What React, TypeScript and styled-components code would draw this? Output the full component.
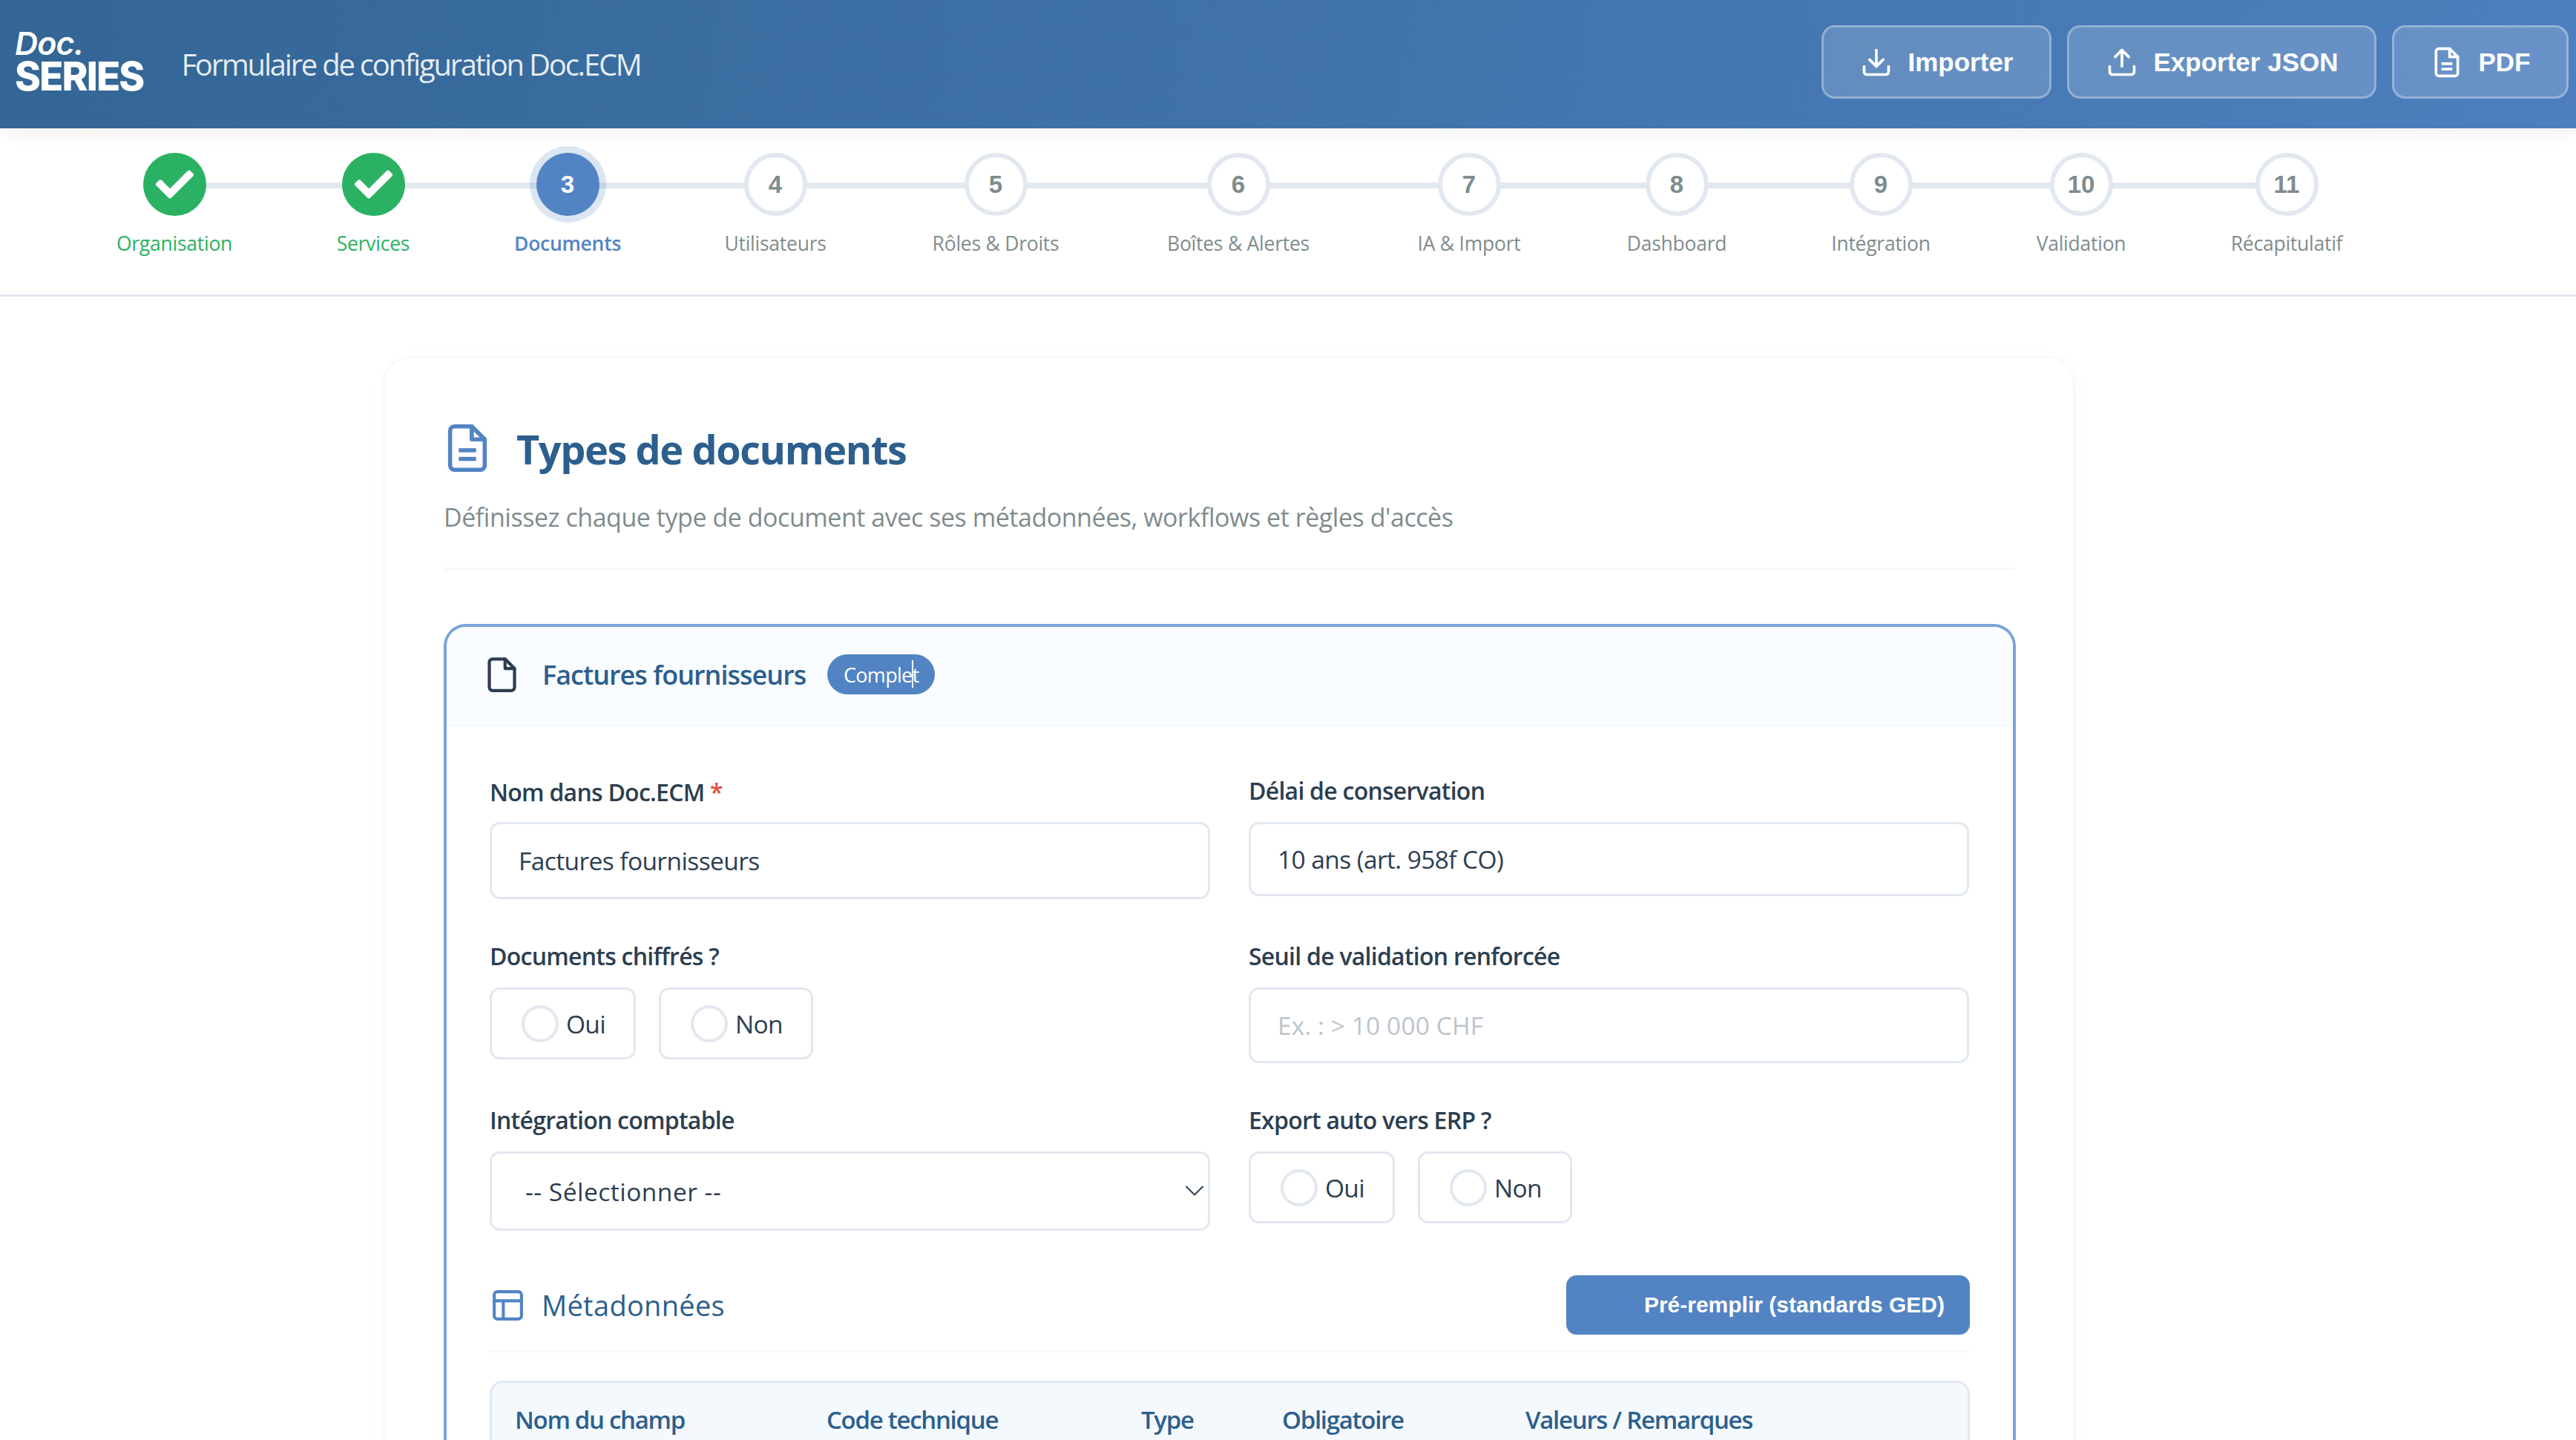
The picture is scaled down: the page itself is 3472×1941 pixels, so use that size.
import React from "react";
import styled, { createGlobalStyle } from "styled-components";
import { FaCheck } from "react-icons/fa";

const Global = createGlobalStyle`
  html, body { margin: 0; padding: 0; width: 3472px; height: 1941px; overflow: hidden; background: #fff; }
  * { box-sizing: border-box; }
  body { font-family: "Open Sans", "Noto Sans", sans-serif; color: #2c3e50; }
`;

const Page = styled.div`
  width: 3472px;
  height: 1941px;
  overflow: hidden;
`;

const Header = styled.header`
  position: relative;
  z-index: 2;
  height: 173px;
  padding: 0 10px 0 20px;
  display: flex;
  align-items: center;
  justify-content: space-between;
  background: linear-gradient(100deg, #336695 0%, #4d7fbe 100%);
  box-shadow: 0 4px 24px rgba(0, 0, 0, 0.07);
`;

const Brand = styled.div`
  display: flex;
  align-items: center;
  gap: 51px;
`;

const Logo = styled.div`
  display: flex;
  flex-direction: column;
  font-family: Inter, sans-serif;
  color: #fff;
  margin-top: -8px;
`;

const LogoDoc = styled.span`
  font-size: 43px;
  line-height: 40px;
  font-style: italic;
  font-weight: 600;
  letter-spacing: -0.8px;
`;

const LogoSeries = styled.span`
  font-size: 53px;
  line-height: 50px;
  font-weight: 800;
  letter-spacing: -1.9px;
`;

const AppTitle = styled.h1`
  margin: 0;
  font-size: 40px;
  font-weight: 400;
  letter-spacing: -2.23px;
  color: rgba(255, 255, 255, 0.88);
`;

const Actions = styled.div`
  display: flex;
  gap: 21px;
  margin-top: -6px;
`;

const HeaderButton = styled.button<{ $w: number }>`
  width: ${(p) => p.$w}px;
  height: 99px;
  display: flex;
  align-items: center;
  justify-content: center;
  gap: 21px;
  border: 3px solid rgba(255, 255, 255, 0.3);
  border-radius: 18px;
  background: rgba(255, 255, 255, 0.16);
  color: #fff;
  font-family: "Liberation Sans", Arial, sans-serif;
  font-size: 35px;
  font-weight: 700;
  padding: 0;
`;

const StepperBar = styled.nav`
  height: 227px;
  width: 3472px;
  border-bottom: 3px solid #e2e8f0;
  padding: 31px 0 0 158px;
`;

const Track = styled.ol`
  position: relative;
  list-style: none;
  margin: 0;
  padding: 2px 0 0;
  display: inline-flex;
  gap: 142px;
  &::before {
    content: "";
    position: absolute;
    left: 77px;
    right: 74px;
    top: 42px;
    height: 8px;
    background: #e2e8f0;
  }
`;

const Step = styled.li<{ $w: number }>`
  position: relative;
  width: ${(p) => p.$w}px;
  display: flex;
  flex-direction: column;
  align-items: center;
  gap: 19px;
`;

type StepState = "done" | "active" | "todo";

const Dot = styled.div<{ $s: StepState }>`
  width: 85px;
  height: 85px;
  border-radius: 50%;
  display: flex;
  align-items: center;
  justify-content: center;
  font-size: 33px;
  font-family: "Liberation Sans", Arial, sans-serif;
  font-weight: 700;
  color: ${(p) => (p.$s === "todo" ? "#7f8c8d" : "#fff")};
  background: ${(p) => (p.$s === "done" ? "#2bb163" : p.$s === "active" ? "#5284c4" : "#fff")};
  border: ${(p) => (p.$s === "todo" ? "6px solid #e2e8f0" : "none")};
  box-shadow: ${(p) => (p.$s === "active" ? "0 0 0 9px rgba(82,132,196,.2)" : "none")};
`;

const StepLabel = styled.span<{ $s: StepState }>`
  font-size: 26.5px;
  line-height: 36px;
  letter-spacing: -0.25px;
  white-space: nowrap;
  font-weight: ${(p) => (p.$s === "active" ? 600 : 400)};
  color: ${(p) => (p.$s === "done" ? "#2bb163" : p.$s === "active" ? "#5284c4" : "#7f8c8d")};
`;

const Main = styled.main`
  width: 3313px;
  padding-top: 80px;
`;

const Card = styled.section`
  width: 2281px;
  margin: 0 auto;
  border: 3px solid #f7f9fc;
  border-radius: 36px;
  padding: 86px 77px 0 79px;
  background: #fff;
  box-shadow: 0 4px 30px rgba(44, 95, 141, 0.02);
`;

const TitleRow = styled.div`
  display: flex;
  align-items: center;
  gap: 31px;
  margin-left: -3px;
`;

const PageTitle = styled.h2`
  margin: 2px 0 0;
  font-size: 54px;
  line-height: 68px;
  font-weight: 700;
  letter-spacing: -1.4px;
  color: #2c5f8d;
`;

const Subtitle = styled.p`
  margin: 33px 0 0;
  padding-bottom: 43px;
  border-bottom: 4px solid #f4f9fd;
  font-size: 34px;
  line-height: 50px;
  letter-spacing: -0.46px;
  color: #7f8c8d;
`;

const TypeCard = styled.article`
  margin-top: 72px;
  border: 4px solid #7ba3d8;
  border-radius: 30px 30px 0 0;
  border-bottom: none;
  height: 1200px;
  overflow: hidden;
`;

const TypeHead = styled.div`
  height: 134px;
  padding: 0 0 4px 49px;
  display: flex;
  align-items: center;
  background: #fafdff;
  border-bottom: 2px solid #f6f9fc;
`;

const TypeName = styled.h3`
  margin: 0 29px 0 29px;
  font-size: 36px;
  font-weight: 600;
  letter-spacing: -1px;
  color: #2c5f8d;
`;

const Badge = styled.span`
  position: relative;
  height: 54px;
  width: 145px;
  border-radius: 27px;
  background: #5284c4;
  color: #fff;
  font-size: 27px;
  letter-spacing: -0.7px;
  display: flex;
  align-items: center;
  justify-content: center;
  &::after {
    content: "";
    position: absolute;
    left: 114px;
    top: 8px;
    width: 2px;
    height: 37px;
    background: #fff;
  }
`;

const TypeBody = styled.div`
  padding: 67px 58px 0;
`;

const FormGrid = styled.div`
  display: grid;
  grid-template-columns: 971px 971px;
  column-gap: 52px;
  row-gap: 57px;
  align-items: start;
`;

const Field = styled.div`
  display: flex;
  flex-direction: column;
`;

const FieldLabel = styled.label<{ $required?: boolean }>`
  font-size: 32px;
  line-height: 40px;
  font-weight: 600;
  letter-spacing: -0.75px;
  color: #2c3e50;
  margin-top: ${(p) => (p.$required ? "2px" : "0")};
  margin-bottom: ${(p) => (p.$required ? "20px" : "22px")};
`;

const Star = styled.span`
  color: #e74c3c;
`;

const TextInput = styled.input<{ $h: number }>`
  height: ${(p) => p.$h}px;
  width: 100%;
  border: 3px solid #e2e8f0;
  border-radius: 14px;
  padding: 0 36px;
  background: #fff;
  font-family: inherit;
  font-size: 33.5px;
  letter-spacing: -0.6px;
  color: #2c3e50;
  outline: none;
  &::placeholder {
    color: #bcc4cc;
    letter-spacing: 0.1px;
  }
`;

const SelectWrap = styled.div`
  position: relative;
  height: 107px;
  & > svg {
    position: absolute;
    right: 9px;
    top: 46px;
    color: #2c3e50;
  }
`;

const Select = styled.select`
  appearance: none;
  width: 100%;
  height: 100%;
  border: 3px solid #e2e8f0;
  border-radius: 14px;
  padding: 0 45px;
  background: #fff;
  font-family: inherit;
  font-size: 33.5px;
  letter-spacing: 0.5px;
  color: #2c3e50;
`;

const RadioGroup = styled.div`
  display: flex;
  gap: 31px;
`;

const RadioBox = styled.label<{ $w: number }>`
  width: ${(p) => p.$w}px;
  height: 97px;
  border: 3px solid #e2e8f0;
  border-radius: 14px;
  padding-left: 40px;
  display: flex;
  align-items: center;
  gap: 10px;
  font-size: 33.5px;
  font-weight: 500;
  letter-spacing: -0.7px;
  color: #2c3e50;
`;

const RadioDot = styled.input`
  appearance: none;
  margin: 0;
  width: 50px;
  height: 50px;
  border: 4px solid #e2e8f0;
  border-radius: 50%;
  background: #fff;
`;

const MetaHead = styled.div`
  margin-top: 60px;
  padding-bottom: 21px;
  border-bottom: 3px solid #f4f9fd;
  display: flex;
  align-items: center;
  justify-content: space-between;
`;

const MetaTitle = styled.div`
  display: flex;
  align-items: center;
  gap: 21px;
  font-size: 38px;
  font-weight: 500;
  letter-spacing: 0.3px;
  color: #2c5f8d;
`;

const PrefillButton = styled.button`
  width: 544px;
  height: 80px;
  padding: 0 34px 0 0;
  border: none;
  border-radius: 14px;
  background: #5284c4;
  color: #fff;
  font-family: "Liberation Sans", Arial, sans-serif;
  font-size: 30px;
  font-weight: 700;
  text-align: right;
`;

const TableHead = styled.div`
  margin-top: 38px;
  height: 200px;
  padding: 28px 0 0 31px;
  border: 3px solid #e2e8f0;
  border-radius: 18px 18px 0 0;
  background: #f4f9fd;
  display: grid;
  grid-template-columns: 420px 424px 190px 328px 1fr;
  align-items: start;
`;

const TableCol = styled.div`
  font-size: 33px;
  line-height: 44px;
  font-weight: 600;
  letter-spacing: -1.3px;
  color: #2c5f8d;
`;

const stroke = { fill: "none", stroke: "currentColor", strokeLinecap: "round", strokeLinejoin: "round" } as const;

const DownloadIcon = () => (
  <svg width="44" height="44" viewBox="0 0 24 24" strokeWidth="2" {...stroke}>
    <path d="M21 15v4a2 2 0 0 1-2 2H5a2 2 0 0 1-2-2v-4" />
    <path d="M7 10l5 5 5-5" />
    <path d="M12 15V3" />
  </svg>
);

const UploadIcon = () => (
  <svg width="44" height="44" viewBox="0 0 24 24" strokeWidth="2" {...stroke}>
    <path d="M21 15v4a2 2 0 0 1-2 2H5a2 2 0 0 1-2-2v-4" />
    <path d="M17 8l-5-5-5 5" />
    <path d="M12 3v12" />
  </svg>
);

const FileIcon = ({ size, lines, color, sw = 2 }: { size: number; lines?: boolean; color?: string; sw?: number }) => (
  <svg width={size} height={size} viewBox="0 0 24 24" strokeWidth={sw} {...stroke} style={color ? { color } : undefined}>
    <path d="M14 2H6a2 2 0 0 0-2 2v16a2 2 0 0 0 2 2h12a2 2 0 0 0 2-2V8z" />
    <path d="M14 2v6h6" />
    {lines && (
      <>
        <path d="M8 13h8" strokeLinecap="butt" />
        <path d="M8 17h8" strokeLinecap="butt" />
      </>
    )}
  </svg>
);

const TableIcon = () => (
  <svg width="49" height="49" viewBox="0 0 24 24" strokeWidth="2" {...stroke} style={{ color: "#5284c4" }}>
    <rect x="3" y="3" width="18" height="18" rx="2" />
    <path d="M3 9h18" />
    <path d="M9 9v12" />
  </svg>
);

const SelectArrow = () => (
  <svg width="24" height="14" viewBox="0 0 24 14" strokeWidth="2" {...stroke}>
    <path d="M1 1.5l11 11 11-11" />
  </svg>
);

const steps: { n: number; label: string; s: StepState; w: number }[] = [
  { n: 1, label: "Organisation", s: "done", w: 154 },
  { n: 2, label: "Services", s: "done", w: 98 },
  { n: 3, label: "Documents", s: "active", w: 142 },
  { n: 4, label: "Utilisateurs", s: "todo", w: 134 },
  { n: 5, label: "Rôles & Droits", s: "todo", w: 176 },
  { n: 6, label: "Boîtes & Alertes", s: "todo", w: 194 },
  { n: 7, label: "IA & Import", s: "todo", w: 144 },
  { n: 8, label: "Dashboard", s: "todo", w: 132 },
  { n: 9, label: "Intégration", s: "todo", w: 134 },
  { n: 10, label: "Validation", s: "todo", w: 122 },
  { n: 11, label: "Récapitulatif", s: "todo", w: 148 },
];

const YesNo = ({ name }: { name: string }) => (
  <RadioGroup>
    <RadioBox $w={197}>
      <RadioDot type="radio" name={name} />
      Oui
    </RadioBox>
    <RadioBox $w={208}>
      <RadioDot type="radio" name={name} />
      Non
    </RadioBox>
  </RadioGroup>
);

export default function App() {
  return (
    <Page>
      <Global />
      <Header>
        <Brand>
          <Logo>
            <LogoDoc>Doc.</LogoDoc>
            <LogoSeries>SERIES</LogoSeries>
          </Logo>
          <AppTitle>Formulaire de configuration Doc.ECM</AppTitle>
        </Brand>
        <Actions>
          <HeaderButton $w={310}>
            <DownloadIcon />
            Importer
          </HeaderButton>
          <HeaderButton $w={417}>
            <UploadIcon />
            Exporter JSON
          </HeaderButton>
          <HeaderButton $w={238}>
            <FileIcon size={44} lines />
            PDF
          </HeaderButton>
        </Actions>
      </Header>

      <StepperBar>
        <Track>
          {steps.map((st) => (
            <Step key={st.n} $w={st.w}>
              <Dot $s={st.s}>{st.s === "done" ? <FaCheck size={51} /> : st.n}</Dot>
              <StepLabel $s={st.s}>{st.label}</StepLabel>
            </Step>
          ))}
        </Track>
      </StepperBar>

      <Main>
        <Card>
          <TitleRow>
            <FileIcon size={70} lines color="#5284c4" sw={1.9} />
            <PageTitle>Types de documents</PageTitle>
          </TitleRow>
          <Subtitle>Définissez chaque type de document avec ses métadonnées, workflows et règles d'accès</Subtitle>

          <TypeCard>
            <TypeHead>
              <FileIcon size={51} color="#2c3e50" />
              <TypeName>Factures fournisseurs</TypeName>
              <Badge>Complet</Badge>
            </TypeHead>
            <TypeBody>
              <FormGrid>
                <Field>
                  <FieldLabel $required>
                    Nom dans Doc.ECM <Star>*</Star>
                  </FieldLabel>
                  <TextInput $h={104} readOnly value="Factures fournisseurs" />
                </Field>
                <Field>
                  <FieldLabel>Délai de conservation</FieldLabel>
                  <TextInput $h={100} readOnly value="10 ans (art. 958f CO)" />
                </Field>
                <Field>
                  <FieldLabel>Documents chiffrés ?</FieldLabel>
                  <YesNo name="chiffres" />
                </Field>
                <Field>
                  <FieldLabel>Seuil de validation renforcée</FieldLabel>
                  <TextInput $h={102} readOnly placeholder="Ex. : > 10 000 CHF" />
                </Field>
                <Field>
                  <FieldLabel>Intégration comptable</FieldLabel>
                  <SelectWrap>
                    <Select defaultValue="">
                      <option value="">-- Sélectionner --</option>
                    </Select>
                    <SelectArrow />
                  </SelectWrap>
                </Field>
                <Field>
                  <FieldLabel>Export auto vers ERP ?</FieldLabel>
                  <YesNo name="erp" />
                </Field>
              </FormGrid>

              <MetaHead>
                <MetaTitle>
                  <TableIcon />
                  Métadonnées
                </MetaTitle>
                <PrefillButton>Pré-remplir (standards GED)</PrefillButton>
              </MetaHead>

              <TableHead>
                <TableCol>Nom du champ</TableCol>
                <TableCol>Code technique</TableCol>
                <TableCol>Type</TableCol>
                <TableCol>Obligatoire</TableCol>
                <TableCol>Valeurs / Remarques</TableCol>
              </TableHead>
            </TypeBody>
          </TypeCard>
        </Card>
      </Main>
    </Page>
  );
}
